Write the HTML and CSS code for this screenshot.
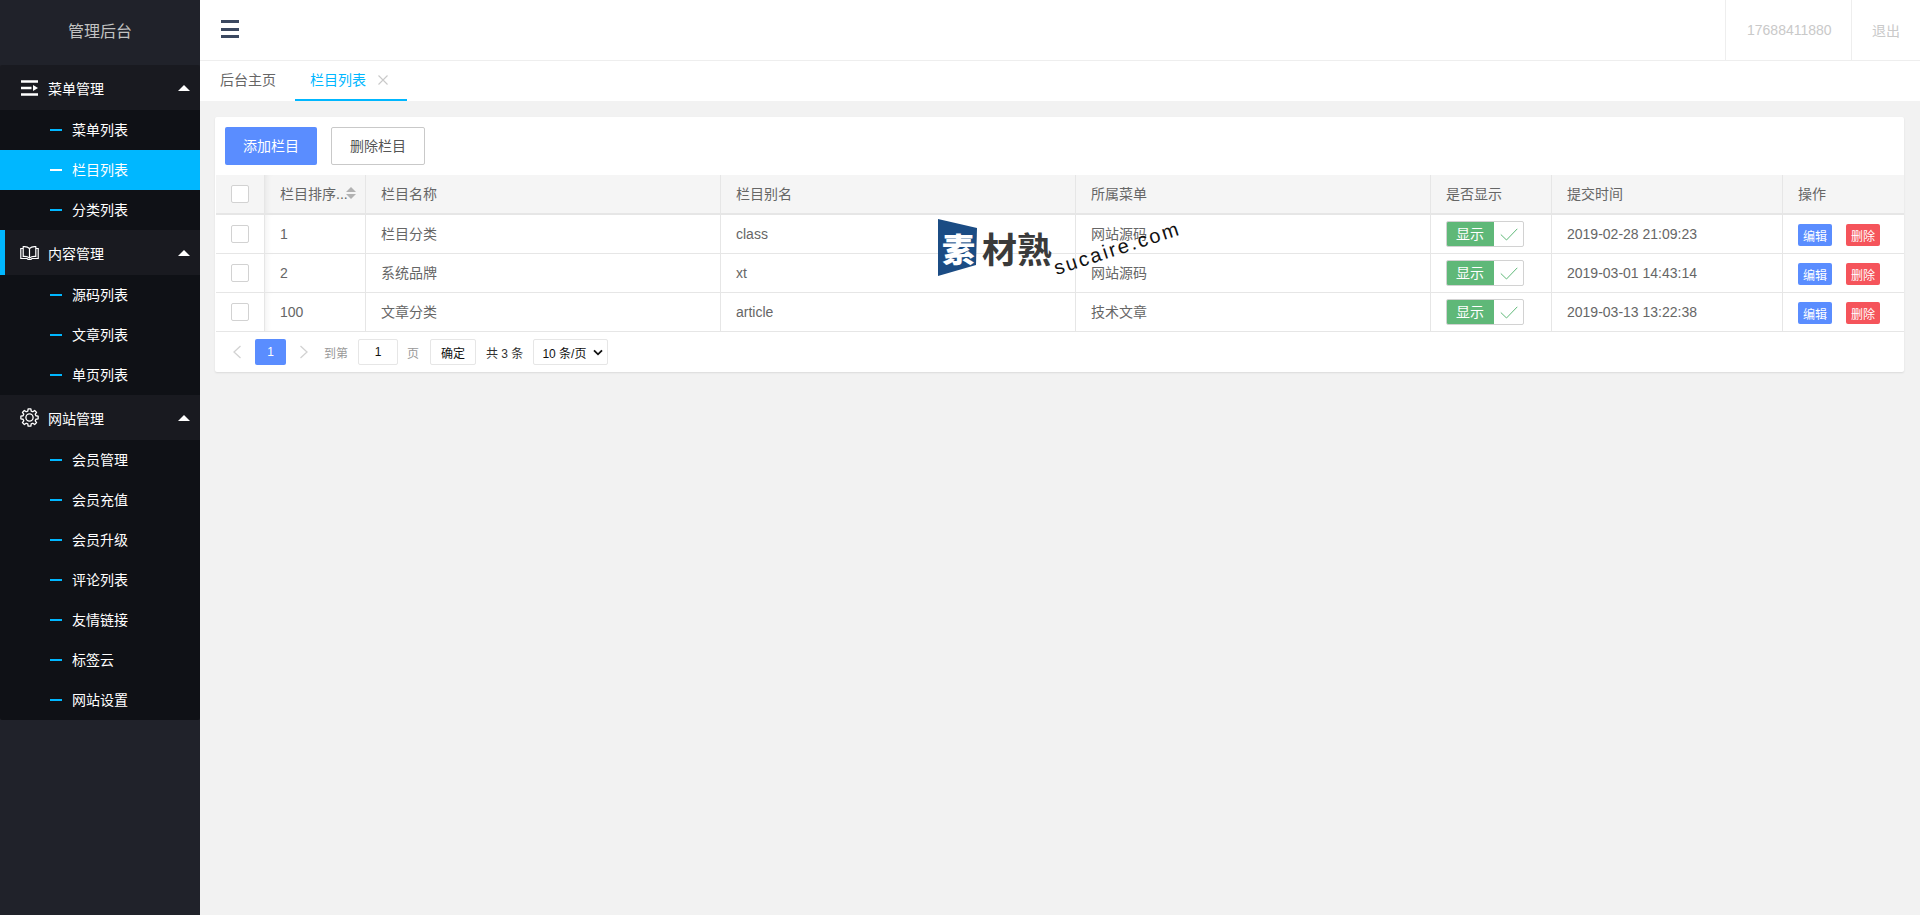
FILE: index.html
```html
<!DOCTYPE html>
<html lang="zh-CN">
<head>
<meta charset="utf-8">
<title>管理后台</title>
<link rel="stylesheet" href="styles.css">
</head>
<body>
<div class="app">
  <aside class="side">
    <div class="brand">管理后台</div>
    <nav class="nav">
      <div class="group-head">
        <svg class="gicon menu" viewBox="0 0 17 16"><path d="M0 1.500h17M0 8h10.500M0 14.500h17" stroke="#fff" stroke-width="2.400" fill="none"/><path d="M12 5l5 3-5 3z" fill="#fff"/></svg>
        <span>菜单管理</span><i class="caret"></i>
      </div>
      <ul class="sub">
        <li class="item"><i class="dash"></i>菜单列表</li>
        <li class="item active"><i class="dash"></i>栏目列表</li>
        <li class="item"><i class="dash"></i>分类列表</li>
      </ul>
      <div class="group-head current">
        <svg class="gicon book" viewBox="0 0 19 14"><path d="M9.500 2.500C8 1 5.500.4 3.200.7V10.500c2.300-.3 4.800.3 6.300 1.500 1.500-1.200 4-1.800 6.300-1.500V.7C13.500.4 11 1 9.500 2.500zM9.500 2.500V12M3.200 2.500H.8v10h6.200l1.200 1h2.600l1.200-1h6.200v-10h-2.400" stroke="#fff" stroke-width="1.200" fill="none"/></svg>
        <span>内容管理</span><i class="caret"></i>
      </div>
      <ul class="sub">
        <li class="item"><i class="dash"></i>源码列表</li>
        <li class="item"><i class="dash"></i>文章列表</li>
        <li class="item"><i class="dash"></i>单页列表</li>
      </ul>
      <div class="group-head">
        <svg class="gicon gear" viewBox="0 0 20 20"><circle cx="10" cy="10" r="3.800" stroke="#fff" stroke-width="1.400" fill="none"/><polygon points="8.190,3.240 8.560,.91 11.440,.91 11.810,3.240 13.500,3.940 15.410,2.550 17.450,4.590 16.060,6.500 16.760,8.190 19.090,8.560 19.090,11.440 16.760,11.810 16.060,13.500 17.450,15.410 15.410,17.450 13.500,16.060 11.810,16.760 11.440,19.090 8.560,19.090 8.190,16.760 6.500,16.060 4.590,17.450 2.550,15.410 3.940,13.500 3.240,11.810 .91,11.440 .91,8.560 3.240,8.190 3.940,6.500 2.550,4.590 4.590,2.550 6.500,3.940" stroke="#fff" stroke-width="1.400" stroke-linejoin="round" fill="none"/></svg>
        <span>网站管理</span><i class="caret"></i>
      </div>
      <ul class="sub">
        <li class="item"><i class="dash"></i>会员管理</li>
        <li class="item"><i class="dash"></i>会员充值</li>
        <li class="item"><i class="dash"></i>会员升级</li>
        <li class="item"><i class="dash"></i>评论列表</li>
        <li class="item"><i class="dash"></i>友情链接</li>
        <li class="item"><i class="dash"></i>标签云</li>
        <li class="item"><i class="dash"></i>网站设置</li>
      </ul>
    </nav>
  </aside>
  <main class="main">
    <header class="top">
      <div class="burger"><i></i><i></i><i></i></div>
      <div class="top-right">
        <div class="top-link phone">17688411880</div>
        <div class="top-link quit">退出</div>
      </div>
    </header>
    <div class="tabs">
      <div class="tab">后台主页</div>
      <div class="tab on">栏目列表
        <svg class="close" viewBox="0 0 10 10"><path d="M.5.5l9 9M9.500.5l-9 9" stroke="#c9c9c9" stroke-width="1.100" fill="none"/></svg>
      </div>
    </div>
    <section class="content">
      <div class="card">
        <div class="toolbar">
          <button class="btn primary">添加栏目</button>
          <button class="btn plain">删除栏目</button>
        </div>
        <table class="grid">
          <colgroup>
            <col class="c0"><col class="c1"><col class="c2"><col class="c3"><col class="c4"><col class="c5"><col class="c6"><col class="c7">
          </colgroup>
          <thead>
            <tr>
              <th class="chk"><i class="box"></i></th>
              <th class="shadow"><span class="sorted"><span class="clip">栏目排序...</span><span class="sort"><i class="up"></i><i class="down"></i></span></span></th>
              <th>栏目名称</th><th>栏目别名</th><th>所属菜单</th><th>是否显示</th><th>提交时间</th><th>操作</th>
            </tr>
          </thead>
          <tbody>
            <tr>
              <td class="chk"><i class="box"></i></td><td class="shadow">1</td><td class="zh">栏目分类</td><td>class</td><td class="zh">网站源码</td>
              <td><span class="switch"><span class="on-part">显示</span><span class="off-part"><svg class="tick" viewBox="0 0 18 13"><path d="M.8 6.500l5.700 5.500L17.300.8" stroke="#5fb878" stroke-width="1" fill="none"/></svg></span></span></td>
              <td>2019-02-28 21:09:23</td>
              <td class="ops"><span class="mini blue">编辑</span><span class="mini red">删除</span></td>
            </tr>
            <tr>
              <td class="chk"><i class="box"></i></td><td class="shadow">2</td><td class="zh">系统品牌</td><td>xt</td><td class="zh">网站源码</td>
              <td><span class="switch"><span class="on-part">显示</span><span class="off-part"><svg class="tick" viewBox="0 0 18 13"><path d="M.8 6.500l5.700 5.500L17.300.8" stroke="#5fb878" stroke-width="1" fill="none"/></svg></span></span></td>
              <td>2019-03-01 14:43:14</td>
              <td class="ops"><span class="mini blue">编辑</span><span class="mini red">删除</span></td>
            </tr>
            <tr>
              <td class="chk"><i class="box"></i></td><td class="shadow">100</td><td class="zh">文章分类</td><td>article</td><td class="zh">技术文章</td>
              <td><span class="switch"><span class="on-part">显示</span><span class="off-part"><svg class="tick" viewBox="0 0 18 13"><path d="M.8 6.500l5.700 5.500L17.300.8" stroke="#5fb878" stroke-width="1" fill="none"/></svg></span></span></td>
              <td>2019-03-13 13:22:38</td>
              <td class="ops"><span class="mini blue">编辑</span><span class="mini red">删除</span></td>
            </tr>
          </tbody>
        </table>
        <div class="pager">
          <svg class="arrow" viewBox="0 0 10 14"><path d="M8.500 1L2 7l6.500 6" stroke="#d2d2d2" stroke-width="1.300" fill="none"/></svg>
          <span class="page-cur">1</span>
          <svg class="arrow next" viewBox="0 0 10 14"><path d="M1.500 1L8 7l-6.500 6" stroke="#d2d2d2" stroke-width="1.300" fill="none"/></svg>
          <span class="muted to">到第</span>
          <span class="field num">1</span>
          <span class="muted pg">页</span>
          <span class="field ok">确定</span>
          <span class="total">共 3 条</span>
          <span class="field limit">10 条/页<svg class="chev" viewBox="0 0 10 7"><path d="M1 1.300l4 4 4-4" stroke="#111" stroke-width="1.800" fill="none"/></svg></span>
        </div>
      </div>
    </section>
  </main>
</div>
<div class="mark">
  <svg class="mark-flag" viewBox="0 0 39 57"><path d="M0 0l39 9-1 37L0 57z" fill="#1b4c84"/></svg>
  <span class="mark-su">素</span>
  <span class="mark-name">材熟</span>
  <span class="mark-url">sucaire.com</span>
</div>
</body>
</html>
```
FILE: styles.css
```css
* { box-sizing: border-box; }
html, body { margin: 0; height: 100%; }
body {
  font-family: "Liberation Sans", "Noto Sans CJK SC", sans-serif;
  font-size: 14px;
  color: #666;
  background: #f2f2f2;
  overflow: hidden;
}
ul { list-style: none; margin: 0; padding: 0; }
i { display: block; font-style: normal; }

.app { display: flex; height: 915px; }

.side { width: 200px; flex: none; background: #20222a; color: #fff; }
.brand {
  height: 65px;
  display: flex;
  align-items: center;
  justify-content: center;
  padding-bottom: 6px;
  font-size: 16px;
  color: #c2c2c2;
}
.nav { border-radius: 2px; overflow: hidden; }
.group-head {
  height: 45px;
  display: flex;
  align-items: center;
  padding-left: 20px;
  background: #191a20;
  position: relative;
  font-size: 14px;
}
.group-head.current::before {
  content: "";
  position: absolute;
  left: 0; top: 0; bottom: 0;
  width: 5px;
  background: #00b7ff;
}
.gicon { flex: none; }
.menu { width: 17px; height: 16px; margin: 0 10px 0 1px; }
.book { width: 19px; height: 14px; margin-right: 9px; }
.gear { width: 19px; height: 19px; margin-right: 9px; }
.caret {
  position: absolute;
  right: 10px;
  top: 20px;
  width: 0; height: 0;
  border-left: 6px solid transparent;
  border-right: 6px solid transparent;
  border-bottom: 6px solid #fff;
}
.sub { background: #0f1116; }
.item {
  height: 40px;
  display: flex;
  align-items: center;
  padding: 0 0 2px 50px;
  color: #fff;
}
.item.active { background: #00b7ff; }
.dash { width: 12px; height: 2px; background: #00b7ff; margin: 2px 10px 0 0; }
.active .dash { background: #fff; }

.main { flex: 1; min-width: 0; display: flex; flex-direction: column; }
.top {
  height: 61px;
  background: #fff;
  border-bottom: 1px solid #eee;
  display: flex;
  justify-content: space-between;
}
.burger { margin: 20px 0 0 21px; width: 18px; }
.burger i { height: 3px; background: #3b4860; margin-bottom: 4.500px; }
.top-right { display: flex; }
.top-link {
  display: flex;
  align-items: center;
  border-left: 1px solid #eee;
  color: #c9c9c9;
  white-space: nowrap;
}
.phone { width: 126px; padding-left: 21px; }
.quit { width: 69px; padding-left: 20px; }

.tabs { height: 40px; background: #fff; display: flex; }
.tab {
  height: 40px;
  display: flex;
  align-items: center;
  padding: 0 19px 2px 20px;
  color: #666;
  line-height: 20px;
}
.tab.on {
  color: #00b7ff;
  border-bottom: 2px solid #00b7ff;
  padding: 0 15px;
  width: 112px;
}
.close { width: 10px; height: 10px; margin-left: 12px; }

.content { padding: 16px 16px 0 15px; }
.card {
  background: #fff;
  box-shadow: 0 1px 2px rgba(0, 0, 0, .1);
  border-radius: 2px;
}
.toolbar { height: 58px; padding: 10px 10px 0; display: flex; gap: 14px; }
.btn {
  height: 38px;
  border-radius: 2px;
  font: inherit;
  padding: 0 0 2px;
}
.primary { width: 92px; background: #5a8dff; border: 0; color: #fff; }
.plain { width: 94px; background: #fff; border: 1px solid #c9c9c9; color: #555; }

.grid {
  width: calc(100% - 1px);
  margin-left: 1px;
  table-layout: fixed;
  border-collapse: separate;
  border-spacing: 0;
}
.c0 { width: 49px; }
.c1 { width: 101px; }
.c2 { width: 355px; }
.c3 { width: 355px; }
.c4 { width: 355px; }
.c5 { width: 121px; }
.c6 { width: 231px; }
.c7 { width: auto; }
th, td {
  padding: 0 15px;
  text-align: left;
  font-weight: 400;
  color: #666;
  border-right: 1px solid #e6e6e6;
  border-bottom: 1px solid #e6e6e6;
  white-space: nowrap;
  vertical-align: middle;
}
th:last-child, td:last-child { border-right: 0; }
th { height: 40px; background: #f5f5f5; border-bottom-width: 2px; padding-bottom: 2px; }
td { height: 39px; }
td.zh { padding-bottom: 2px; }
td.ops { padding-top: 2px; }
th:first-child, td:first-child { padding: 0 0 0 15px; }
.shadow { box-shadow: inset 6px 0 6px -5px rgba(0, 0, 0, .07); }
.box {
  width: 18px; height: 18px;
  border: 1px solid #d2d2d2;
  border-radius: 2px;
  background: #fff;
}
.sorted { display: flex; align-items: center; }
.clip { white-space: nowrap; }
.sort { margin-left: -2px; }
.up, .down { width: 0; height: 0; border-left: 5px solid transparent; border-right: 5px solid transparent; }
.up { border-bottom: 5px solid #b2b2b2; margin-bottom: 2px; }
.down { border-top: 5px solid #b2b2b2; }

.switch {
  display: flex;
  width: 78px;
  height: 26px;
  border-radius: 2px;
  overflow: hidden;
  border: 1px solid #d2d2d2;
}
.on-part {
  width: 48px;
  margin: -1px 0 -1px -1px;
  padding-bottom: 2px;
  background: #5fb878;
  color: #fff;
  display: flex;
  align-items: center;
  justify-content: center;
  flex: none;
}
.off-part { flex: 1; display: flex; align-items: center; justify-content: center; }
.tick { width: 18px; height: 13px; }

.mini {
  display: inline-flex;
  align-items: center;
  justify-content: center;
  width: 34px;
  height: 22px;
  border-radius: 2px;
  font-size: 12px;
  color: #fff;
  margin-right: 14px;
  vertical-align: middle;
}
.blue { background: #5a8dff; }
.red { background: #f5545b; margin-right: 0; }

.pager {
  height: 40px;
  display: flex;
  align-items: center;
  padding-left: 17px;
  font-size: 12px;
  color: #333;
}
.arrow { width: 10px; height: 14px; }
.page-cur {
  width: 31px;
  height: 26px;
  background: #5a8dff;
  color: #fff;
  border-radius: 2px;
  display: flex;
  align-items: center;
  justify-content: center;
  margin: 0 13px;
}
.muted { color: #999; }
.to { margin-left: 15px; }
.field {
  height: 26px;
  border: 1px solid #e6e6e6;
  border-radius: 2px;
  background: #fff;
  display: flex;
  align-items: center;
  justify-content: center;
  color: #111;
}
.num { width: 40px; margin-left: 10px; }
.pg { margin-left: 9px; }
.ok { width: 46px; margin-left: 11px; }
.total { margin-left: 10px; }
.limit { width: 75px; margin-left: 10px; justify-content: flex-start; padding-left: 8px; }
.chev { width: 10px; height: 7px; margin-left: 7px; }

.mark { position: absolute; left: 938px; top: 219px; width: 250px; height: 90px; pointer-events: none; }
.mark-flag { position: absolute; left: 0; top: 0; width: 39px; height: 57px; }
.mark-su {
  position: absolute;
  left: 4px; top: 11px;
  font: 900 33px/37px "Noto Sans CJK SC", sans-serif;
  color: #fff;
}
.mark-name {
  position: absolute;
  left: 44px; top: 9px;
  font: 700 35px/40px "Noto Sans CJK SC", sans-serif;
  color: #3a3a3a;
  white-space: nowrap;
}
.mark-url {
  position: absolute;
  left: 113px; top: 17px;
  font: 400 20px/24px "Liberation Sans", sans-serif;
  letter-spacing: 2.200px;
  color: #111;
  transform: rotate(-18deg);
  white-space: nowrap;
}
```
